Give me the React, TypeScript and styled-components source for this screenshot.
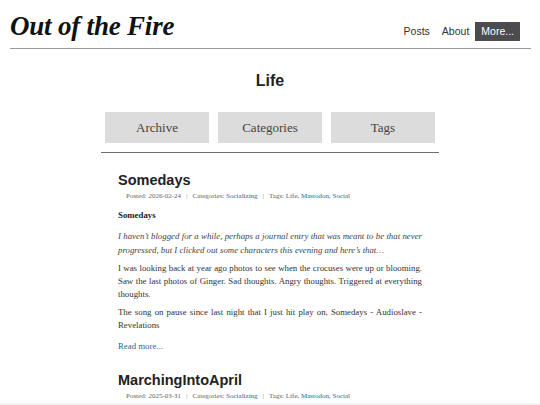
import styled, { createGlobalStyle } from "styled-components";

const GlobalStyle = createGlobalStyle`
  html, body {
    margin: 0;
    padding: 0;
    background: #ffffff;
  }
  body {
    font-family: "Liberation Serif", "Times New Roman", serif;
    color: #333;
  }
  * {
    box-sizing: border-box;
  }
`;

interface PostType {
  title: string;
  date: string;
  category: string;
  tags: string[];
  subhead?: string;
  paragraphs?: { text: string; italic?: boolean }[];
  readMore?: boolean;
}

const posts: PostType[] = [
  {
    title: "Somedays",
    date: "2026-02-24",
    category: "Socializing",
    tags: ["Life", "Mastodon", "Social"],
    subhead: "Somedays",
    paragraphs: [
      {
        text: "I haven’t blogged for a while, perhaps a journal entry that was meant to be that never progressed, but I clicked out some characters this evening and here’s that…",
        italic: true,
      },
      {
        text: "I was looking back at year ago photos to see when the crocuses were up or blooming. Saw the last photos of Ginger. Sad thoughts. Angry thoughts. Triggered at everything thoughts.",
      },
      {
        text: "The song on pause since last night that I just hit play on, Somedays - Audioslave - Revelations",
      },
    ],
    readMore: true,
  },
  {
    title: "MarchingIntoApril",
    date: "2025-03-31",
    category: "Socializing",
    tags: ["Life", "Mastodon", "Social"],
  },
];

const Header = styled.header`
  height: 49px;
  margin: 0 9px 0 10px;
  padding: 0 11px 7px 0;
  border-bottom: 1px solid #9a9a9a;
  display: flex;
  justify-content: space-between;
  align-items: flex-end;
`;

const SiteTitle = styled.div`
  font-family: "Liberation Serif", "Times New Roman", serif;
  font-weight: bold;
  font-style: italic;
  font-size: 27px;
  line-height: 30px;
  letter-spacing: -0.2px;
  color: #111;
`;

const Nav = styled.nav`
  display: flex;
  align-items: flex-end;
`;

const NavLink = styled.a<{ $active?: boolean }>`
  display: block;
  height: 19px;
  line-height: 19px;
  padding: 0 6px;
  font-family: "Liberation Sans", Arial, sans-serif;
  font-size: 10.5px;
  color: ${(p) => (p.$active ? "#fff" : "#333")};
  background: ${(p) => (p.$active ? "#4a4c50" : "transparent")};
  text-decoration: none;
`;

const Main = styled.main`
  padding-top: 22px;
  padding-bottom: 20px;
`;

const PageTitle = styled.h1`
  margin: 0;
  text-align: center;
  font-family: "Liberation Sans", Arial, sans-serif;
  font-size: 16px;
  line-height: 20px;
  font-weight: bold;
  color: #222;
`;

const Tabs = styled.div`
  width: 338px;
  margin: 21px auto 0;
  padding-bottom: 9px;
  border-bottom: 1px solid #707070;
  display: flex;
  justify-content: center;
  gap: 9px;
`;

const Tab = styled.a`
  width: 104px;
  height: 31px;
  display: flex;
  align-items: center;
  justify-content: center;
  background: #dcdcdc;
  font-family: "Liberation Serif", "Times New Roman", serif;
  font-size: 13px;
  color: #444;
  text-decoration: none;
`;

const PostList = styled.div`
  width: 338px;
  margin: 0 auto;
  padding: 18px 17px 0;
  display: flex;
  flex-direction: column;
  gap: 18px;
`;

const Post = styled.article`
  display: block;
`;

const PostTitle = styled.h2`
  margin: 0;
  font-family: "Liberation Sans", Arial, sans-serif;
  font-size: 14.5px;
  line-height: 18px;
  font-weight: bold;
  color: #222;
`;

const Meta = styled.div`
  margin-top: 2px;
  padding-left: 8px;
  font-size: 7px;
  line-height: 10px;
  color: #666;
`;

const MetaLink = styled.a`
  color: #2b6596;
  text-decoration: none;
`;

const Sep = styled.span`
  margin: 0 5px;
  color: #888;
`;

const Subhead = styled.div`
  margin: 8px 0;
  font-weight: bold;
  font-size: 8.8px;
  line-height: 13.3px;
  color: #222;
`;

const Para = styled.p<{ $italic?: boolean }>`
  margin: 0 0 4.7px;
  font-size: 8.8px;
  line-height: 13.3px;
  text-align: justify;
  font-style: ${(p) => (p.$italic ? "italic" : "normal")};
  color: ${(p) => (p.$italic ? "#444" : "#333")};
`;

const ReadMore = styled.p`
  margin: 7px 0 0;
  font-size: 8.8px;
  line-height: 13.3px;
`;

const ReadMoreLink = styled.a`
  color: #2b6596;
  text-decoration: none;
`;

const BottomBar = styled.div`
  position: fixed;
  left: 0;
  right: 0;
  bottom: 0;
  height: 2px;
  background: #f2f2f2;
`;

function PostMeta({ post }: { post: PostType }) {
  return (
    <Meta>
      Posted: {post.date}
      <Sep>|</Sep>
      Categories: <MetaLink href="#">{post.category}</MetaLink>
      <Sep>|</Sep>
      Tags:{" "}
      {post.tags.map((t, i) => (
        <span key={t}>
          <MetaLink href="#">{t}</MetaLink>
          {i < post.tags.length - 1 ? ", " : ""}
        </span>
      ))}
    </Meta>
  );
}

export default function App() {
  return (
    <>
      <GlobalStyle />
      <Header>
        <SiteTitle>Out of the Fire</SiteTitle>
        <Nav>
          <NavLink href="#">Posts</NavLink>
          <NavLink href="#">About</NavLink>
          <NavLink href="#" $active>
            More...
          </NavLink>
        </Nav>
      </Header>
      <Main>
        <PageTitle>Life</PageTitle>
        <Tabs>
          <Tab href="#">Archive</Tab>
          <Tab href="#">Categories</Tab>
          <Tab href="#">Tags</Tab>
        </Tabs>
        <PostList>
          {posts.map((post) => (
            <Post key={post.title}>
              <PostTitle>{post.title}</PostTitle>
              <PostMeta post={post} />
              {post.subhead && <Subhead>{post.subhead}</Subhead>}
              {post.paragraphs?.map((p, i) => (
                <Para key={i} $italic={p.italic}>
                  {p.text}
                </Para>
              ))}
              {post.readMore && (
                <ReadMore>
                  <ReadMoreLink href="#">Read more...</ReadMoreLink>
                </ReadMore>
              )}
            </Post>
          ))}
        </PostList>
      </Main>
      <BottomBar />
    </>
  );
}
